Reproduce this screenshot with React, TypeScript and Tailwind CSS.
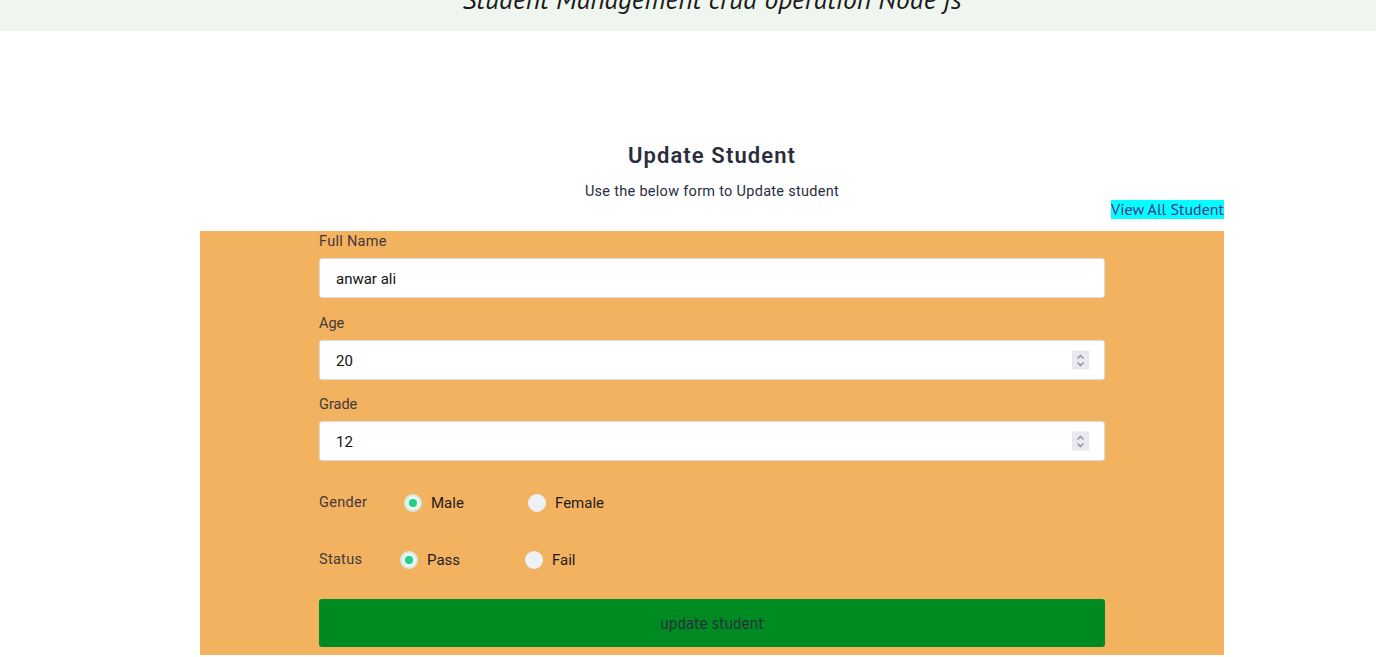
import { useState } from "react";

const BODY_FONT = "font-['Roboto','Noto_Sans',sans-serif]";

function Radio({ checked, label, onClick }: { checked: boolean; label: string; onClick: () => void }) {
  return (
    <label className="flex items-center gap-[9px] cursor-pointer" onClick={onClick}>
      <span
        className={`w-[18px] h-[18px] rounded-full flex items-center justify-center ${
          checked ? "bg-[#eef4f1] border-2 border-[#cfeee0]" : "bg-[#edf1f5]"
        }`}
      >
        {checked && <span className="w-[8px] h-[8px] rounded-full bg-[#1fd18b]" />}
      </span>
      <span className="text-[15px] text-[#1d1d1d]">{label}</span>
    </label>
  );
}

function NumberSpin() {
  return (
    <span className="absolute right-[16px] top-1/2 -translate-y-1/2 w-[17px] h-[19px] bg-[#e8e8ee] flex flex-col items-center justify-center">
      <svg width="9" height="14" viewBox="0 0 9 14" fill="none" stroke="#8c8c96" strokeWidth="1.3">
        <path d="M1.5 5 L4.5 2 L7.5 5" />
        <path d="M1.5 9 L4.5 12 L7.5 9" />
      </svg>
    </span>
  );
}

export default function App() {
  const [name, setName] = useState("anwar ali");
  const [age, setAge] = useState("20");
  const [grade, setGrade] = useState("12");
  const [gender, setGender] = useState("male");
  const [status, setStatus] = useState("pass");

  return (
    <div className={`min-h-screen bg-white ${BODY_FONT}`}>
      {/* Header */}
      <header className="h-[31px] bg-[#eff6ef] overflow-hidden flex justify-center pl-[48px]">
        <h1 className="italic text-[27.5px] leading-none text-[#1b1b1b] mt-[-14px] font-['PT_Sans','Open_Sans','DejaVu_Sans',sans-serif]">
          Student Management crud operation Node js
        </h1>
      </header>

      <main className="w-[1024px] ml-[200px] pt-[111px]">
        <div className="text-center">
          <h2 className="text-[22px] font-semibold text-[#2a2d3d] leading-[28px] tracking-[0.05em]">Update Student</h2>
          <p className="text-[14.5px] text-[#2a2d3d] mt-[13px] leading-[18px] tracking-[0.02em]">
            Use the below form to Update student
          </p>
        </div>

        <div className="flex justify-end mt-[-1px]">
          <a
            href="#"
            className="bg-[#00ffff] text-[#4b2f8c] text-[16px] leading-[19px] font-['PT_Sans','Open_Sans',sans-serif]"
          >
            View All Student
          </a>
        </div>

        <form
          className="bg-[#f3b25f] mt-[12px] px-[119px] pt-[1px] pb-[8px]"
          onSubmit={(e) => e.preventDefault()}
        >
          <label className="block text-[14.5px] text-[#45383a] leading-[20px] tracking-[0.02em]">Full Name</label>
          <input
            value={name}
            onChange={(e) => setName(e.target.value)}
            className="mt-[6px] w-full h-[40px] bg-white rounded-[3px] border border-[#dcdcdc] px-[16px] pt-[2px] text-[15px] text-[#111] outline-none"
          />

          <label className="block text-[14.5px] text-[#45383a] leading-[20px] mt-[16px]">Age</label>
          <div className="relative mt-[6px]">
            <input
              value={age}
              onChange={(e) => setAge(e.target.value)}
              className="w-full h-[40px] bg-white rounded-[3px] border border-[#dcdcdc] px-[16px] pt-[1px] text-[15px] text-[#111] outline-none"
            />
            <NumberSpin />
          </div>

          <label className="block text-[14.5px] text-[#45383a] leading-[20px] mt-[15px]">Grade</label>
          <div className="relative mt-[6px]">
            <input
              value={grade}
              onChange={(e) => setGrade(e.target.value)}
              className="w-full h-[40px] bg-white rounded-[3px] border border-[#dcdcdc] px-[16px] pt-[1px] text-[15px] text-[#111] outline-none"
            />
            <NumberSpin />
          </div>

          <div className="flex items-center mt-[32px] h-[20px]">
            <span className="text-[14.5px] text-[#45383a] w-[85px] tracking-[0.02em]">Gender</span>
            <div className="w-[124px]">
              <Radio checked={gender === "male"} label="Male" onClick={() => setGender("male")} />
            </div>
            <Radio checked={gender === "female"} label="Female" onClick={() => setGender("female")} />
          </div>

          <div className="flex items-center mt-[37px] h-[20px]">
            <span className="text-[14.5px] text-[#45383a] w-[81px] tracking-[0.02em]">Status</span>
            <div className="w-[125px]">
              <Radio checked={status === "pass"} label="Pass" onClick={() => setStatus("pass")} />
            </div>
            <Radio checked={status === "fail"} label="Fail" onClick={() => setStatus("fail")} />
          </div>

          <button
            type="submit"
            className="mt-[29px] w-full h-[48px] bg-[#008a22] rounded-[3px] text-[15px] text-[#2a2d3d] pt-[2px] font-['Ubuntu_Condensed','DejaVu_Sans_Condensed','DejaVu_Sans',sans-serif] [font-stretch:condensed]"
          >
            update student
          </button>
        </form>
      </main>
    </div>
  );
}
